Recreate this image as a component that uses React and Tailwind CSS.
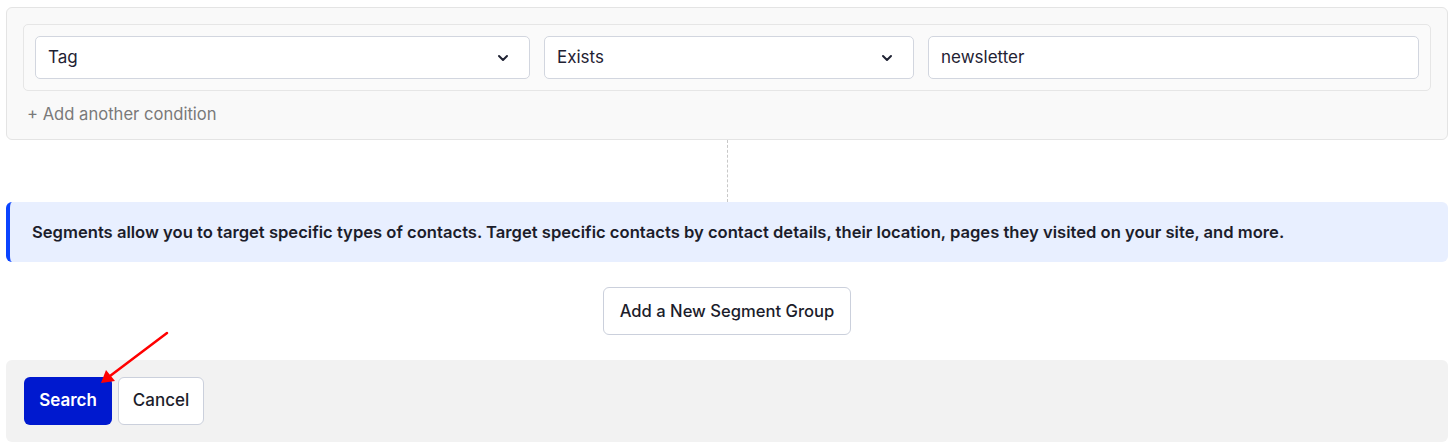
import React from 'react';

const Chevron = () => (
  <svg width="12" height="8" viewBox="0 0 12 8" fill="none" className="shrink-0">
    <path d="M2 2l4 4 4-4" stroke="#1f2233" strokeWidth="2" strokeLinecap="round" strokeLinejoin="round" />
  </svg>
);

const SelectBox = ({ label, className = '' }) => (
  <div className={`h-[43px] flex items-center justify-between pl-3 pr-[20px] bg-white border border-[#d2d6df] rounded-[5px] ${className}`}>
    <span className="text-[17px] text-[#1f2233]">{label}</span>
    <Chevron />
  </div>
);

export default function App() {
  return (
    <div className="relative w-[1454px] h-[447px] bg-white px-[6px] pt-[7px] text-[#1f2233]" style={{ fontFamily: 'Inter, "Open Sans", sans-serif' }}>
      {/* Condition box */}
      <div className="bg-[#f9f9f9] border border-[#e4e4e4] rounded-md px-4 pt-4 pb-[13px]">
        <div className="flex gap-[14px] pl-[11px] pr-[11px] py-[11px] border border-[#e6e6e6] rounded-[5px] bg-[#fafafa]">
          <SelectBox label="Tag" className="w-[495px]" />
          <SelectBox label="Exists" className="w-[370px]" />
          <div className="flex-1 h-[43px] flex items-center px-3 bg-white border border-[#d2d6df] rounded-[5px]">
            <span className="text-[17px] text-[#1f2233]">newsletter</span>
          </div>
        </div>
        <div className="mt-[11px] pl-1 text-[16.6px] leading-6 text-[#7a7a7a]">+ Add another condition</div>
      </div>

      {/* Connector */}
      <div className="flex justify-center">
        <div className="h-[62px] border-l border-dashed border-[#c8c8c8]" />
      </div>

      {/* Info banner */}
      <div className="h-[60px] flex items-center bg-[#e8efff] border-l-4 border-[#0a44ff] rounded-md pl-[22px]">
        <p className="text-[16.6px] font-semibold text-[#1c1d2b]">
          Segments allow you to target specific types of contacts. Target specific contacts by contact details, their location, pages they visited on your site, and more.
        </p>
      </div>

      <div className="flex justify-center mt-[25px]">
        <button className="h-[48px] w-[248px] bg-white border border-[#cbd0dc] rounded-md text-[16.6px] font-medium text-[#1c1d2b]">
          Add a New Segment Group
        </button>
      </div>

      {/* Footer */}
      <div className="mt-[25px] h-[82px] bg-[#f2f2f2] rounded-md flex items-center gap-[6px] px-[18px]">
        <button className="h-[48px] w-[88px] bg-[#0019cf] rounded-md text-white text-[17px] font-semibold">Search</button>
        <button className="h-[48px] w-[86px] bg-white border border-[#cbd0dc] rounded-md text-[17px] font-medium text-[#1c1d2b]">Cancel</button>
      </div>

      {/* Annotation arrow */}
      <svg className="absolute left-0 top-0 pointer-events-none" width="1454" height="447">
        <line x1="167" y1="333" x2="110" y2="376" stroke="#f00" strokeWidth="2.5" strokeLinecap="round" />
        <polygon points="101,383 106,370 115,381" fill="#f00" />
      </svg>
    </div>
  );
}
